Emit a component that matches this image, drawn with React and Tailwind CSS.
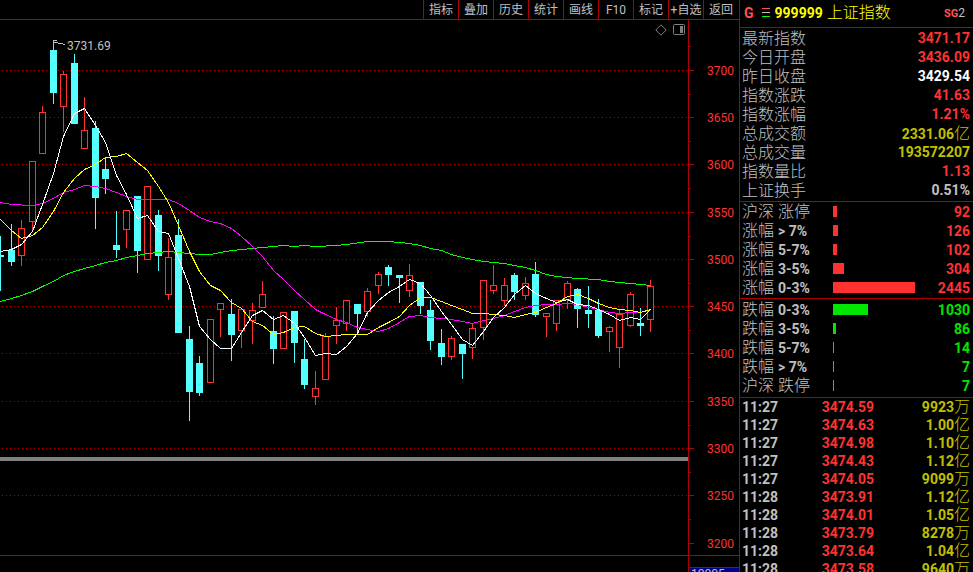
import clsx from 'clsx';

const menuItems = ['指标', '叠加', '历史', '统计', '画线', 'F10', '标记', '+自选', '返回'];

const quotes = [
  { label: '最新指数', value: '3471.17', color: 'text-[#ff3232]' },
  { label: '今日开盘', value: '3436.09', color: 'text-[#ff3232]' },
  { label: '昨日收盘', value: '3429.54', color: 'text-white' },
  { label: '指数涨跌', value: '41.63', color: 'text-[#ff3232]' },
  { label: '指数涨幅', value: '1.21%', color: 'text-[#ff3232]' },
  { label: '总成交额', value: '2331.06', unit: '亿', color: 'text-[#c0c000]' },
  { label: '总成交量', value: '193572207', color: 'text-[#c0c000]' },
  { label: '指数量比', value: '1.13', color: 'text-[#ff3232]' },
  { label: '上证换手', value: '0.51%', color: 'text-[#c0c0c0]' },
];

const risers = [
  { name: '沪深', range: '涨停', count: 92, width: 4 },
  { name: '涨幅', range: '> 7%', count: 126, width: 5 },
  { name: '涨幅', range: '5-7%', count: 102, width: 4 },
  { name: '涨幅', range: '3-5%', count: 304, width: 11 },
  { name: '涨幅', range: '0-3%', count: 2445, width: 82 },
];

const fallers = [
  { name: '跌幅', range: '0-3%', count: 1030, width: 35 },
  { name: '跌幅', range: '3-5%', count: 86, width: 3 },
  { name: '跌幅', range: '5-7%', count: 14, width: 1 },
  { name: '跌幅', range: '> 7%', count: 7, width: 1 },
  { name: '沪深', range: '跌停', count: 7, width: 1 },
];

const trades = [
  ['11:27', '3474.59', '9923', '万'],
  ['11:27', '3474.63', '1.00', '亿'],
  ['11:27', '3474.98', '1.10', '亿'],
  ['11:27', '3474.43', '1.12', '亿'],
  ['11:27', '3474.05', '9099', '万'],
  ['11:28', '3473.91', '1.12', '亿'],
  ['11:28', '3474.01', '1.05', '亿'],
  ['11:28', '3473.79', '8278', '万'],
  ['11:28', '3473.64', '1.04', '亿'],
  ['11:28', '3473.58', '9640', '万'],
];

// price -> y on the chart
const priceLevels = [
  [3700, 50], [3650, 97], [3600, 144], [3550, 192], [3500, 239], [3450, 286],
  [3400, 333], [3350, 381], [3300, 428], [3250, 475], [3200, 523],
];

// x, high, body top, body bottom, low, rising
const candles = [
  [0, 216, 235, 237, 271, 0], [11, 204, 230, 242, 246, 0], [21, 200, 208, 236, 246, 1],
  [32, 141, 141, 202, 211, 1], [42, 86, 92, 134, 134, 1], [53, 21, 30, 73, 84, 0],
  [63, 51, 54, 87, 112, 1], [74, 34, 43, 104, 104, 0], [84, 77, 110, 129, 129, 1],
  [95, 101, 108, 178, 209, 0], [105, 137, 149, 159, 174, 0], [116, 191, 225, 230, 238, 0],
  [126, 190, 190, 210, 228, 1], [137, 176, 176, 231, 253, 0], [147, 166, 166, 240, 240, 1],
  [158, 190, 195, 236, 251, 0], [168, 218, 237, 275, 280, 1], [178, 199, 215, 313, 313, 0],
  [189, 306, 319, 372, 401, 0], [199, 336, 343, 373, 376, 0], [210, 299, 299, 363, 363, 1],
  [220, 283, 283, 290, 317, 1], [231, 279, 294, 315, 341, 0], [241, 289, 289, 311, 328, 1],
  [252, 283, 290, 301, 324, 1], [262, 261, 274, 288, 288, 1], [273, 296, 311, 329, 344, 0],
  [283, 292, 292, 329, 329, 1], [294, 291, 291, 323, 343, 0], [304, 319, 339, 365, 369, 0],
  [315, 351, 368, 377, 385, 1], [325, 313, 316, 360, 360, 1], [336, 287, 300, 306, 324, 1],
  [346, 280, 280, 304, 311, 1], [357, 284, 284, 294, 314, 0], [367, 268, 271, 292, 297, 1],
  [378, 252, 254, 266, 274, 1], [388, 245, 247, 255, 266, 0], [399, 255, 255, 258, 283, 0],
  [409, 244, 255, 271, 277, 1], [420, 262, 262, 286, 294, 0], [430, 280, 290, 321, 330, 0],
  [441, 309, 323, 337, 345, 0], [451, 316, 318, 337, 340, 1], [462, 324, 324, 334, 359, 0],
  [472, 303, 308, 328, 339, 1], [483, 260, 260, 308, 320, 1], [493, 245, 265, 271, 274, 1],
  [504, 258, 265, 281, 286, 1], [514, 253, 255, 272, 280, 0], [525, 257, 263, 276, 280, 1],
  [535, 242, 254, 295, 297, 0], [546, 293, 293, 297, 317, 1], [556, 280, 280, 304, 311, 1],
  [567, 261, 263, 280, 289, 1], [577, 268, 269, 289, 308, 0], [588, 266, 290, 294, 308, 0],
  [598, 279, 290, 316, 318, 0], [609, 306, 307, 312, 332, 1], [619, 290, 294, 328, 348, 1],
  [630, 272, 274, 306, 307, 1], [640, 288, 303, 306, 316, 0], [650, 260, 266, 300, 312, 1],
];

const averages = [
  {
    color: '#00ff00',
    points:
      '0,281 11,278 21,275 32,271 42,266 53,261 63,255 74,251 84,248 95,245 105,242 116,240 126,237 137,235 147,233 158,232 168,231 178,232 189,233 199,234 210,234 220,232 231,230 252,228 262,227 283,225 294,226 304,225 315,226 336,225 346,224 367,221 388,221 399,222 409,223 420,225 430,228 441,230 451,234 462,237 472,239 483,241 493,242 504,243 514,245 525,247 535,250 546,254 556,256 577,258 598,259 609,261 630,263 650,265',
  },
  {
    color: '#ff00ff',
    points:
      '0,182 11,184 32,185 42,183 53,178 63,172 74,169 84,165 95,166 105,168 116,172 126,176 137,179 147,179 158,179 168,179 178,183 189,190 199,197 210,201 220,203 231,208 241,216 252,226 262,236 273,250 283,259 294,270 304,279 315,289 325,294 336,299 346,302 357,307 367,309 378,311 388,308 399,302 409,296 420,295 430,297 441,298 451,299 462,301 472,303 483,300 493,298 504,295 514,291 525,287 535,285 546,284 556,284 567,283 577,284 588,287 598,289 609,292 619,293 630,292 640,292 650,289',
  },
  {
    color: '#ffff00',
    points:
      '0,199 11,210 21,218 32,215 42,207 53,191 63,172 74,158 84,149 95,144 105,137 116,136 126,133 137,142 147,150 158,166 168,182 178,205 189,231 199,251 210,265 220,270 231,282 241,288 252,301 262,305 273,314 283,312 294,307 304,306 315,313 325,316 336,315 346,314 367,314 378,307 388,302 399,296 409,285 420,277 430,277 441,281 451,285 462,289 472,293 483,293 493,294 504,295 514,297 525,294 535,292 546,287 556,283 567,276 577,274 588,278 598,283 609,287 619,289 630,290 640,292 650,289',
  },
  {
    color: '#ffffff',
    points:
      '0,231 11,229 21,224 32,211 42,184 53,153 63,116 74,93 84,88 95,105 105,122 116,155 126,174 137,198 147,195 158,211 168,213 178,238 189,266 199,306 210,319 220,328 231,328 241,312 252,295 262,290 273,299 283,295 294,303 304,317 315,335 325,333 336,334 346,326 357,313 367,292 378,280 388,272 399,266 409,259 420,263 430,275 441,291 451,304 462,319 472,325 483,311 493,297 504,287 514,274 525,265 535,273 546,278 556,282 567,279 577,284 588,285 598,289 609,294 619,300 630,297 640,299 650,289',
  },
];

function Candle({ data }) {
  const [x, high, top, bottom, low, rising] = data;

  if (!rising) {
    return (
      <g fill="#54ffff">
        <rect x={x} y={high} width="1" height={low - high} />
        <rect x={x - 3} y={top} width="7" height={bottom - top} />
      </g>
    );
  }

  return (
    <g>
      <rect x={x} y={high} width="1" height={low - high} fill="#ff3232" />
      <rect x={x - 2.5} y={top + 0.5} width="6" height={bottom - top - 1} fill="#000" stroke="#ff3232" />
    </g>
  );
}

function CandleChart() {
  return (
    <svg
      viewBox="0 0 739 535"
      preserveAspectRatio="xMaxYMin slice"
      className="block h-full w-full"
      role="img"
      aria-label="上证指数"
    >
      <g shapeRendering="crispEdges">
        {/* Grid */}
        {priceLevels.slice(0, -1).map(([price, y]) => (
          <line key={price} x1="2" x2="688" y1={y + 0.5} y2={y + 0.5} stroke="#b00000" strokeDasharray="1 3" />
        ))}

        {candles.map((candle) => (
          <Candle key={candle[0]} data={candle} />
        ))}

        {averages.map((line) => (
          <polyline
            key={line.color}
            points={line.points}
            transform="translate(0.5 0.5)"
            fill="none"
            stroke={line.color}
          />
        ))}

        {/* Volume splitter */}
        <rect x="0" y="437" width="688" height="4" fill="#808080" />

        {/* Price axis */}
        <rect x="688" y="0" width="1" height="535" fill="#b00000" />
        {priceLevels.map(([price, y]) => (
          <rect key={price} x="689" y={y} width="5" height="1" fill="#b00000" />
        ))}
        {priceLevels.slice(0, -1).map(([price, y]) => (
          <rect key={price} x="689" y={y + 24} width="2" height="1" fill="#b00000" />
        ))}
        <rect x="689" y="26" width="2" height="1" fill="#b00000" />

        {/* High marker */}
        <path d="M53.5 29V20.5H57M54 22.5H56L65 24.5" fill="none" stroke="#c0c0c0" />
      </g>

      <text x="67" y="30" fill="#c0c0c0" className="text-[12px]">
        3731.69
      </text>
      {priceLevels.map(([price, y]) => (
        <text key={price} x="734" y={y + 5} fill="#ff3232" textAnchor="end" className="text-[12px]">
          {price}
        </text>
      ))}
    </svg>
  );
}

function BreadthRow({ row, up }) {
  return (
    <div className="flex h-[19px] items-center">
      <dt className="w-[91px] shrink-0 whitespace-pre text-[#c0c0c0]">
        <span className="text-base leading-[19px] font-light">{row.name} </span>
        <span className={clsx(/\d/.test(row.range) ? 'text-sm font-bold' : 'text-base leading-[19px] font-light')}>
          {row.range}
        </span>
      </dt>
      <dd className={clsx('flex flex-1 items-center justify-between text-sm font-bold', up ? 'text-[#ff3232]' : 'text-[#00e600]')}>
        <span className="h-[11px] bg-current" style={{ width: row.width }} />
        <span>{row.count}</span>
      </dd>
    </div>
  );
}

function QuotePanel() {
  return (
    <aside className="w-[234px] shrink-0 overflow-hidden border-l border-[#b00000]">
      <header className="flex h-7 items-center border-b border-[#b00000] pr-2 pb-0.5 pl-1 leading-none">
        <span className="text-sm font-bold text-[#ff5050]">G</span>
        <svg viewBox="0 0 8 9" className="mr-[5px] ml-2 h-[9px] w-2" shapeRendering="crispEdges">
          <rect width="8" height="1" fill="#ff5050" />
          <rect y="4" width="8" height="1" fill="#c0c0c0" />
          <rect y="8" width="8" height="1" fill="#00ff00" />
        </svg>
        <h1 className="flex items-center gap-1 text-[#ffff00]">
          <span className="text-sm font-bold">999999</span>
          <span className="text-base leading-none font-light">上证指数</span>
        </h1>
        <span className="ml-auto pt-0.5 text-xs text-[#c0c0c0]">
          <b className="text-[11px] text-[#ff5050]">SG</b>2
        </span>
      </header>

      <dl className="border-b border-[#b00000] py-px pr-[3px] pl-0.5">
        {quotes.map((quote) => (
          <div key={quote.label} className="flex h-[19px] items-center justify-between">
            <dt className="text-base leading-[19px] font-light text-[#c0c0c0]">{quote.label}</dt>
            <dd className={clsx('text-sm leading-[19px] font-bold', quote.color)}>
              {quote.value}
              {quote.unit && <span className="text-base leading-[19px] font-light">{quote.unit}</span>}
            </dd>
          </div>
        ))}
      </dl>

      <dl className="border-b border-[#b00000] pr-[3px] pb-px pl-0.5">
        {risers.map((row) => (
          <BreadthRow key={row.name + row.range} row={row} up />
        ))}
      </dl>

      <dl className="border-b border-[#b00000] pt-px pr-[3px] pb-0.5 pl-0.5">
        {fallers.map((row) => (
          <BreadthRow key={row.name + row.range} row={row} />
        ))}
      </dl>

      <table className="w-full table-fixed text-sm font-bold">
        <colgroup>
          <col className="w-[50px]" />
          <col className="w-[84px]" />
          <col />
        </colgroup>
        <tbody>
          {trades.map(([time, price, amount, unit], index) => (
            <tr key={index} className="h-[18px] leading-[18px]">
              <td className="p-0 pl-0.5 text-[#c0c0c0]">{time}</td>
              <td className="p-0 text-right text-[#ff3232]">{price}</td>
              <td className="p-0 pr-[3px] text-right text-[#c0c000]">
                {amount}
                <span className="text-base leading-[18px] font-light">{unit}</span>
              </td>
            </tr>
          ))}
        </tbody>
      </table>
    </aside>
  );
}

export default function App() {
  return (
    <div className="flex h-screen overflow-hidden bg-black font-[Roboto,'Noto_Sans_CJK_SC',sans-serif]">
      <main className="flex min-w-0 flex-1 flex-col">
        {/* Menu */}
        <nav className="flex h-5 shrink-0 justify-end border-b border-[#b00000] pr-px">
          {menuItems.map((item) => (
            <button
              key={item}
              type="button"
              className="w-[35px] border-l border-[#b00000] text-center text-xs whitespace-nowrap text-[#c0c0c0]"
            >
              {item}
            </button>
          ))}
        </nav>

        <div className="relative min-h-0 flex-1">
          <CandleChart />
          <div className="absolute top-1 right-[54px] flex gap-1.5 text-[#808080]">
            <button type="button" aria-label="标注">
              <svg viewBox="0 0 12 12" className="h-3 w-3" fill="none" stroke="currentColor">
                <path d="M6 0.8L11.2 6L6 11.2L0.8 6Z" />
              </svg>
            </button>
            <button type="button" aria-label="侧栏">
              <svg viewBox="0 0 12 12" className="h-3 w-3" fill="none" stroke="currentColor">
                <rect x="0.5" y="0.5" width="11" height="10" rx="1" />
                <rect x="7" y="2" width="3" height="7" fill="currentColor" stroke="none" />
              </svg>
            </button>
          </div>
        </div>

        {/* Volume pane */}
        <div className="flex h-[17px] shrink-0 justify-end overflow-hidden border-t border-[#b00000]">
          <div className="w-[51px] border-l border-[#b00000] pt-[11px]">
            <div className="border-t border-[#b00000] bg-[#00008c] pl-0.5 text-xs leading-3 text-[#c0c0c0]">10005</div>
          </div>
        </div>
      </main>

      <QuotePanel />
    </div>
  );
}
